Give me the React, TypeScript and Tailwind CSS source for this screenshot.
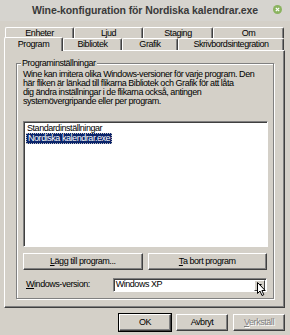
import type { ReactNode } from 'react'

const font = { fontFamily: '"Liberation Sans", Arial, sans-serif' }

function Tab({ label, w, selected }: { label: string; w: string; selected?: boolean }) {
  return (
    <div
      className={`${w} flex items-center justify-center rounded-t-[2px] border border-b-0 border-l-white border-t-white border-r-[#404040] text-[9px] leading-none text-black shadow-[inset_-1px_0_0_#808080] ${
        selected ? 'relative z-10 -mb-[1px] -mt-[1px] h-[14px] bg-[#d4d0c8]' : 'h-full'
      }`}
    >
      {label}
    </div>
  )
}

function Button({ children, w, className = '' }: { children: ReactNode; w: string; className?: string }) {
  return (
    <div
      className={`${w} flex h-[17px] items-center justify-center border border-l-white border-t-white border-r-[#404040] border-b-[#404040] text-[9px] leading-none text-black shadow-[inset_-1px_-1px_0_#808080] ${className}`}
    >
      {children}
    </div>
  )
}

export default function App() {
  return (
    <div className="flex h-[335px] w-[290px] flex-col overflow-hidden bg-[#d4d0c8] tracking-[-0.45px]" style={font}>
      {/* titelrad */}
      <div className="relative flex h-[21px] items-center justify-center bg-[#d6d4cf]">
        <span className="text-[10.5px] font-bold tracking-[-0.1px] text-[#3a3a3a]">
          Wine-konfiguration för Nordiska kalendrar.exe
        </span>
        <span className="absolute right-[8px] top-[5px] flex h-[9px] w-[9px] items-center justify-center rounded-full bg-[#8ab35f]">
          <svg width="5" height="5" viewBox="0 0 5 5">
            <path d="M0.8 0.8 L4.2 4.2 M4.2 0.8 L0.8 4.2" stroke="#fff" strokeWidth="1.2" />
          </svg>
        </span>
      </div>

      {/* flikar */}
      <div className="mt-[6px] ml-[5px] flex h-[11px] w-[279px]">
        <Tab label="Enheter" w="w-[69px]" />
        <Tab label="Ljud" w="w-[69px]" />
        <Tab label="Staging" w="w-[70px]" />
        <Tab label="Om" w="w-[71px]" />
      </div>
      <div className="ml-[4px] flex h-[12px] w-[280px] items-end">
        <Tab label="Program" w="w-[59px]" selected />
        <Tab label="Bibliotek" w="w-[59px]" />
        <Tab label="Grafik" w="w-[56px]" />
        <Tab label="Skrivbordsintegration" w="w-[106px]" />
      </div>

      {/* flikpanel */}
      <div className="ml-[4px] h-[258px] w-[281px] border border-l-white border-t-white border-r-[#404040] border-b-[#404040] shadow-[inset_-1px_-1px_0_#808080]">
        <div className="relative mt-[12px] ml-[11px] flex h-[236px] w-[258px] flex-col border border-[#808080] px-[6px] pt-[6px] shadow-[inset_1px_1px_0_#fff,1px_1px_0_#fff]">
          <span className="absolute -top-[6px] left-[4px] bg-[#d4d0c8] px-[1px] text-[9px] leading-[11px] text-black">
            Programinställningar
          </span>
          <p className="whitespace-nowrap text-[9px] leading-[9px] text-black">
            Wine kan imitera olika Windows-versioner för varje program. Den
            <br />
            här fliken är länkad till flikarna Bibliotek och Grafik för att låta
            <br />
            dig ändra inställningar i de flikarna också, antingen
            <br />
            systemövergripande eller per program.
          </p>

          <div className="mt-[15px] h-[126px] w-[245px] border border-l-[#808080] border-t-[#808080] border-r-white border-b-white bg-white shadow-[inset_1px_1px_0_#404040]">
            <div className="px-[2px] pt-[2px] text-[9px] leading-[9px]">
              <div className="px-[1px] text-black">Standardinställningar</div>
              <div className="w-max border border-dotted border-[#c0c0c0] bg-[#0a246a] px-[1px] text-white">
                Nordiska kalendrar.exe
              </div>
            </div>
          </div>

          <div className="mt-[6px] flex gap-[5px]">
            <Button w="w-[120px]">
              <span>
                <span className="underline">L</span>ägg till program...
              </span>
            </Button>
            <Button w="w-[120px]">
              <span>
                <span className="underline">T</span>a bort program
              </span>
            </Button>
          </div>

          <div className="mt-[8px] flex h-[14px] items-center">
            <span className="ml-[3px] w-[87px] text-[9px] text-black">
              <span className="underline">W</span>indows-version:
            </span>
            <div className="relative flex h-[14px] w-[155px] items-center border border-l-[#808080] border-t-[#808080] border-r-white border-b-white bg-white shadow-[inset_1px_1px_0_#404040]">
              <span className="ml-[2px] flex-1 text-[9px] text-black">Windows XP</span>
              <div className="mr-[1px] flex h-[11px] w-[11px] items-center justify-center border border-l-white border-t-white border-r-[#404040] border-b-[#404040] bg-[#d4d0c8]">
                <svg width="5" height="3" viewBox="0 0 5 3">
                  <path d="M0 0 H5 L2.5 3 Z" fill="#000" />
                </svg>
              </div>
              <svg className="absolute left-[143px] top-[3px]" width="9" height="15" viewBox="0 0 9 15">
                <path d="M0.5 0.5 V11.5 L3 9 L5 13.5 L6.8 12.7 L4.9 8.5 H8.2 Z" fill="#fff" stroke="#000" strokeWidth="1" />
              </svg>
            </div>
          </div>
        </div>
      </div>

      {/* knappar */}
      <div className="mt-[6px] flex justify-end gap-[5px] pr-[5px]">
        <Button w="w-[52px]" className="outline outline-1 outline-black">
          OK
        </Button>
        <Button w="w-[52px]">Avbryt</Button>
        <Button w="w-[52px]">
          <span className="text-[#808080] [text-shadow:1px_1px_0_#fff]">
            <span className="underline">V</span>erkställ
          </span>
        </Button>
      </div>
    </div>
  )
}
